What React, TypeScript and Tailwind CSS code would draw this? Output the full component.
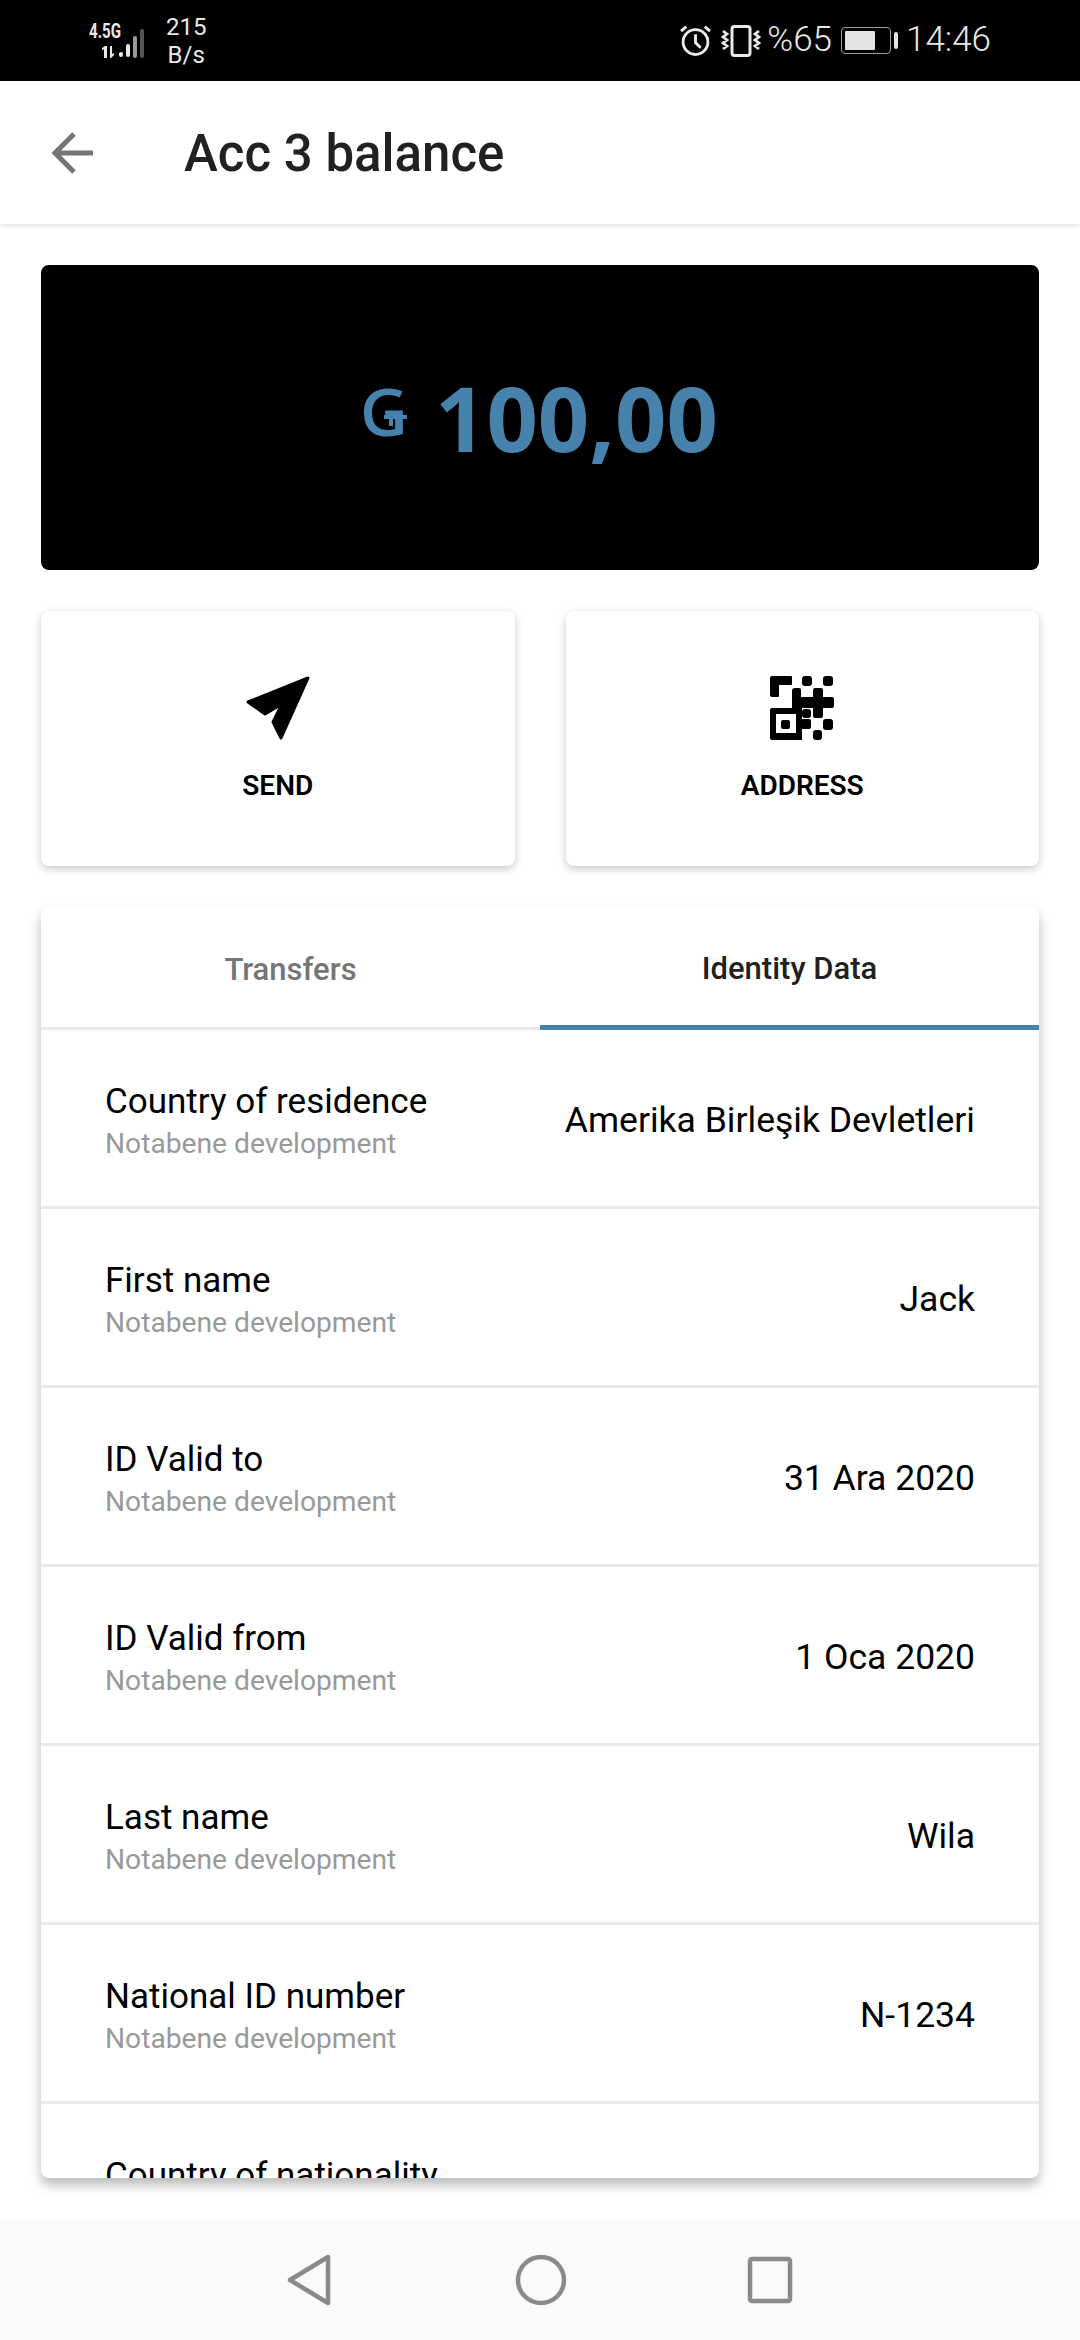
import React from 'react';

const rows = [
  { label: 'Country of residence', value: 'Amerika Birleşik Devletleri' },
  { label: 'First name', value: 'Jack' },
  { label: 'ID Valid to', value: '31 Ara 2020' },
  { label: 'ID Valid from', value: '1 Oca 2020' },
  { label: 'Last name', value: 'Wila' },
  { label: 'National ID number', value: 'N-1234' },
  { label: 'Country of nationality', value: '' },
];

const SignalIcon = () => (
  <svg width="62" height="36" viewBox="0 0 62 36">
    <g fill="#e8e8e8">
      <path d="M12 34V25l-2 1.5v-2.5l3-2h2v12zM18 34V22h2v8l2-1v2l-3 3z" />
      <rect x="27" y="28" width="4" height="5" rx="2" />
      <rect x="34" y="20" width="4" height="13" rx="2" />
    </g>
    <rect x="41" y="12" width="4" height="22" rx="2" fill="#9a9a9a" />
    <rect x="48" y="5" width="4" height="29" rx="2" fill="#555" />
  </svg>
);

const AlarmIcon = () => (
  <svg width="31" height="31" viewBox="0 0 30 30" fill="none" stroke="#e8e8e8" strokeWidth="2.8">
    <circle cx="15" cy="16.5" r="12" />
    <path d="M15 9v8l5 5M1 6l5-4.5M29 6l-5-4.5" />
  </svg>
);

const VibrateIcon = () => (
  <svg width="40" height="32" viewBox="0 0 40 32" fill="none" stroke="#e8e8e8" strokeWidth="3">
    <rect x="11" y="1.5" width="18" height="29" rx="2.5" />
    <path d="M2 6l4 3-4 3 4 3-4 3 4 3-4 3M38 6l-4 3 4 3-4 3 4 3-4 3 4 3" strokeWidth="2.8" />
  </svg>
);

const BatteryIcon = () => (
  <div className="flex items-center gap-[3px]">
    <div className="w-[50px] h-[27px] border border-[#9a9a9a] rounded-[4px] p-[3px]">
      <div className="w-[30px] h-full bg-[#e4e4e4] rounded-[1px]" />
    </div>
    <div className="w-[4px] h-[17px] bg-[#e4e4e4] rounded-[2px]" />
  </div>
);

const StatusBar = () => (
  <div className="h-[81px] bg-black flex items-center justify-between pl-[88px] pr-[89px] font-['Roboto',sans-serif] text-[#e8e8e8]">
    <div className="flex items-center">
      <div className="relative w-[66px] h-[40px]">
        <span className="absolute left-[1px] top-[-5px] text-[21px] font-bold origin-left scale-x-[0.72]">4.5G</span>
        <div className="absolute left-[4px] top-[3px]">
          <SignalIcon />
        </div>
      </div>
      <div className="ml-[12px] text-center text-[24px] leading-[28px] font-normal">
        <div>215</div>
        <div>B/s</div>
      </div>
    </div>
    <div className="flex items-center">
      <AlarmIcon />
      <div className="ml-[10px]">
        <VibrateIcon />
      </div>
      <span className="ml-[6px] text-[35px] font-light">%65</span>
      <div className="ml-[9px]">
        <BatteryIcon />
      </div>
      <span className="ml-[8px] text-[35px] font-light">14:46</span>
    </div>
  </div>
);

const Header = () => (
  <header className="relative z-10 h-[143px] bg-white flex items-center pl-[50px] shadow-[0_2px_5px_rgba(0,0,0,0.12)] font-['Roboto',sans-serif]">
    <svg width="44" height="44" viewBox="0 0 44 44" fill="none" stroke="#757575" strokeWidth="5">
      <path d="M43 22H6M24 3L5 22l19 19" />
    </svg>
    <h1 className="ml-[90px] mt-[4px] text-[51px] font-medium text-[#212121]">Acc 3 balance</h1>
  </header>
);

// the currency sign in the shot is a G with a small cross bar, no installed font has that form
const GuaraniSign = () => (
  <span className="relative inline-block mb-[16px] text-[66px] leading-none font-semibold">
    G
    <span className="absolute left-[24px] top-[38px] w-[23px] h-[4px] bg-[#4682ab]" />
    <span className="absolute left-[29px] top-[38px] w-[4px] h-[11px] bg-[#4682ab]" />
  </span>
);

const BalanceCard = () => (
  <div className="h-[305px] bg-black rounded-[8px] flex items-center justify-center pr-[2px] text-[#4682ab] font-['Open_Sans',sans-serif]">
    <GuaraniSign />
    <span className="ml-[27px] text-[90px] font-bold">100,00</span>
  </div>
);

const ActionButton = ({ icon, label }: { icon: React.ReactNode; label: string }) => (
  <div className="h-[255px] bg-white rounded-[8px] shadow-[0_3px_8px_rgba(0,0,0,0.22)] flex flex-col items-center pt-[65px]">
    {icon}
    <span className="mt-[25px] text-[28px] font-semibold text-black">{label}</span>
  </div>
);

const SendIcon = () => (
  <svg width="64" height="64" viewBox="0 0 64 64" fill="#000" stroke="#000" strokeWidth="3" strokeLinejoin="round">
    <path d="M62 2L2 26l17 12 17-10-9 18 8 16z" />
  </svg>
);

const QrIcon = () => (
  <svg width="64" height="64" viewBox="0 0 64 64" fill="#000">
    <path d="M2 0h19a1 1 0 011 1v7a1 1 0 01-1 1H9v11a1 1 0 01-1 1H2a2 2 0 01-2-2V2a2 2 0 012-2z" />
    <rect x="32" y="0" width="10" height="10" rx="3" />
    <rect x="53" y="0" width="10" height="10" rx="3" />
    <path d="M25 12h4a2 2 0 012 2v7h12v-7a2 2 0 012-2h6a2 2 0 012 2v7h9a2 2 0 012 2v7a2 2 0 01-2 2H53v8a2 2 0 01-2 2h-6a2 2 0 01-2-2v-8H22V15a3 3 0 013-3z" />
    <path fillRule="evenodd" d="M2 32h30v11h7a2 2 0 012 2v6a2 2 0 01-2 2h-7v11H2a2 2 0 01-2-2V34a2 2 0 012-2zM6 38v19h20V38z" />
    <rect x="11" y="44" width="9" height="9" rx="2" />
    <rect x="32" y="33" width="9" height="9" rx="3" />
    <rect x="53" y="43" width="10" height="11" rx="3" />
    <rect x="43" y="54" width="9" height="10" rx="3" />
  </svg>
);

const IdentityCard = () => (
  <div className="h-[1271px] bg-white rounded-[8px] overflow-hidden shadow-[0_7px_12px_rgba(0,0,0,0.28)] font-['Roboto',sans-serif]">
    <div className="h-[123px] flex border-b-[3px] border-[#e9e9e9]">
      <div className="w-1/2 flex items-center justify-center pt-[7px] text-[31px] font-medium text-[#757575]">Transfers</div>
      <div className="w-1/2 h-[123px] flex items-center justify-center pt-[7px] text-[31px] font-medium text-[#212121] border-b-[5px] border-[#4682ab]">
        Identity Data
      </div>
    </div>
    {rows.map((row) => (
      <div key={row.label} className="h-[179px] shrink-0 flex items-center justify-between px-[64px] pt-[6px] border-b-[3px] border-[#e9e9e9]">
        <div>
          <div className="text-[35px] leading-[44px] text-black">{row.label}</div>
          <div className="text-[28.2px] leading-[39px] text-[#999999]">Notabene development</div>
        </div>
        <div className="text-[35.5px] text-black">{row.value}</div>
      </div>
    ))}
  </div>
);

const NavBar = () => (
  <div className="h-[120px] bg-[#fafafa] flex items-center justify-center">
    <svg width="44" height="52" viewBox="0 0 44 52" fill="none" stroke="#8a8a8a" strokeWidth="4.5" strokeLinejoin="round">
      <path d="M41 3v46L3 26z" />
    </svg>
    <svg className="ml-[184px]" width="52" height="52" viewBox="0 0 52 52" fill="none" stroke="#8a8a8a" strokeWidth="4.5">
      <circle cx="26" cy="26" r="23" />
    </svg>
    <svg className="ml-[180px]" width="46" height="48" viewBox="0 0 46 48" fill="none" stroke="#8a8a8a" strokeWidth="4.5" strokeLinejoin="round">
      <rect x="3" y="3" width="40" height="42" rx="2" />
    </svg>
  </div>
);

export default function App() {
  return (
    <div className="w-[1080px] h-[2340px] flex flex-col bg-white overflow-hidden font-['Roboto',sans-serif]">
      <StatusBar />
      <Header />
      <main className="flex-1 px-[41px] pt-[41px] flex flex-col gap-[41px]">
        <BalanceCard />
        <div className="grid grid-cols-2 gap-[51px]">
          <ActionButton icon={<SendIcon />} label="SEND" />
          <ActionButton icon={<QrIcon />} label="ADDRESS" />
        </div>
        <IdentityCard />
      </main>
      <NavBar />
    </div>
  );
}
